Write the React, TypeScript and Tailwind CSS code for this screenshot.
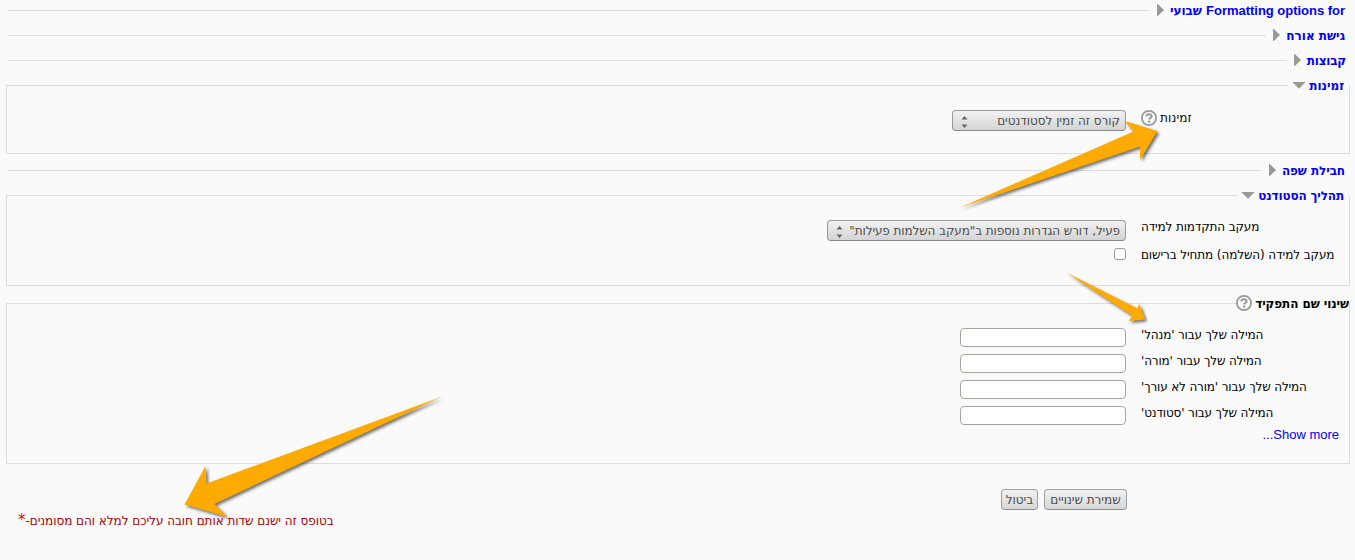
import type { ReactNode } from 'react';

const base = "font-['DejaVu_Sans','Liberation_Sans',sans-serif]";

function HelpIcon() {
  return (
    <svg className="size-4 shrink-0" viewBox="0 0 16 16" fill="none">
      <circle cx="8" cy="8" r="7.1" stroke="#999" strokeWidth="1.8" />
      <path d="M5.4 6.5C5.4 5 6.5 4.3 8 4.3s2.6.8 2.6 2.1c0 1.5-2.4 1.5-2.4 3" stroke="#999" strokeWidth="2" />
      <path d="M7 10.6h2.3v2H7z" fill="#999" />
    </svg>
  );
}

function Closed() {
  return (
    <svg className="ms-[6px] -mt-px h-3 w-[7px] shrink-0" viewBox="0 0 7 12">
      <path d="M0 0h.8L7 6 .8 12H0z" fill="#999" />
    </svg>
  );
}

function Open() {
  return (
    <svg className="ms-1 h-[7px] w-3 shrink-0" viewBox="0 0 12 7">
      <path d="M0 0h12v.8L6 6.8 0 .8z" fill="#999" />
    </svg>
  );
}

function Collapsed({ children, className = '', text = '' }: { children: ReactNode; className?: string; text?: string }) {
  return (
    <div className={`flex h-[21px] items-center pl-2 pr-[10px] ${className}`}>
      <a className={`whitespace-nowrap text-[12px] font-bold leading-[21px] text-[#0000ff] ${text}`}>{children}</a>
      <Closed />
      <span className="ms-[7px] h-px flex-1 bg-[#ddd]" />
    </div>
  );
}

function Box({ legend, children, className }: { legend: ReactNode; children: ReactNode; className: string }) {
  return (
    <section className={`ml-[6px] mr-[5px] flex flex-col border-x border-b border-[#ddd] ${className}`}>
      <div className="-mt-[10px] flex h-[21px] shrink-0 items-center">{legend}</div>
      {children}
    </section>
  );
}

function OpenLegend({ children, text = '' }: { children: ReactNode; text?: string }) {
  return (
    <>
      <a className={`ms-[5px] whitespace-nowrap text-[12px] font-bold text-[#0000ff] ${text}`}>{children}</a>
      <Open />
      <span className="ms-[5px] h-px flex-1 bg-[#ddd]" />
    </>
  );
}

function Row({ label, help, children, className, text = '' }: { label: string; help?: boolean; children: ReactNode; className: string; text?: string }) {
  return (
    <div className={`flex shrink-0 items-start gap-[15px] ${className}`}>
      <div className={`flex h-4 w-[208px] items-center justify-end gap-[3px] whitespace-nowrap text-[12px] leading-4 ${text}`}>
        <span>{label}</span>
        {help && <span className="-mt-px flex"><HelpIcon /></span>}
      </div>
      {children}
    </div>
  );
}

function Select({ children, className }: { children: string; className: string }) {
  return (
    <div className={`flex h-[21px] items-center justify-between rounded-[4px] border border-[#999] border-b-[#888] bg-linear-to-b from-[#f2f2f2] to-[#d4d4d4] ps-[5px] pe-2 text-[12px] text-[#4c4c4c] ${className}`}>
      <span className="whitespace-nowrap">{children}</span>
      <svg className="mt-[2px] h-3 w-[7px] shrink-0" viewBox="0 0 7 12">
        <path d="M.5 3.5L3.5 0l3 3.5zM.5 8.5h6l-3 3.5z" fill="#666" />
      </svg>
    </div>
  );
}

const roles = ['מנהל', 'מורה', 'מורה לא עורך', 'סטודנט'];

function Button({ children, className }: { children: string; className: string }) {
  return (
    <button className={`h-[21px] whitespace-nowrap rounded-[4px] border border-[#a0a0a0] border-b-[#8c8c8c] bg-linear-to-b from-[#f2f2f2] to-[#d6d6d6] text-[12px] leading-[20px] text-[#4c4c4c] ${className}`}>
      {children}
    </button>
  );
}

export default function App() {
  return (
    <main dir="rtl" className={`relative flex h-[560px] w-[1355px] flex-col overflow-hidden bg-[#fafafa] text-black ${base}`}>
      <Collapsed text="tracking-[-0.02px]">
        <span className="font-['Liberation_Sans'] text-[13px]">Formatting options for</span> שבועי
      </Collapsed>
      <Collapsed className="mt-1" text="pt-[2px]">גישת אורח</Collapsed>
      <Collapsed className="mt-1" text="pt-[2px] -ms-px tracking-[-0.2px]">קבוצות</Collapsed>

      <Box className="mt-[14px] h-[69px]" legend={<OpenLegend>זמינות</OpenLegend>}>
        <Row className="mt-[14px] h-[21px]" label="זמינות" help text="tracking-[0.15px]">
          <Select className="w-[174px] tracking-[-0.03px]">קורס זה זמין לסטודנטים</Select>
        </Row>
      </Box>

      <Collapsed className="mt-[6px]" text="pt-[2px] tracking-[-0.1px]">חבילת שפה</Collapsed>

      <Box className="mt-[14px] h-[91px]" legend={<OpenLegend text="tracking-[-0.15px]">תהליך הסטודנט</OpenLegend>}>
        <Row className="mt-[14px] h-[27px]" label="מעקב התקדמות למידה" text="-mt-px tracking-[-0.15px]">
          <Select className="w-[299px] tracking-[-0.1px]">פעיל, דורש הגדרות נוספות ב"מעקב השלמות פעילות"</Select>
        </Row>
        <Row className="h-4" label="מעקב למידה (השלמה) מתחיל ברישום" text="tracking-[-0.1px]">
          <span className="mt-px size-3 rounded-[3px] border border-[#999] bg-white" />
        </Row>
      </Box>

      <Box
        className="mt-[17px] h-[161px]"
        legend={
          <>
            <span className="whitespace-nowrap pt-px text-[12px] font-bold tracking-[-0.1px]">שינוי שם התפקיד</span>
            <span className="-mt-px ms-[3px] flex"><HelpIcon /></span>
            <span className="h-px flex-1 bg-[#ddd]" />
          </>
        }
      >
        <div className="mt-[14px] flex flex-col">
          {roles.map(r => (
            <Row key={r} className="h-[26px]" label={`המילה שלך עבור '${r}'`} text="-mt-px tracking-[-0.15px]">
              <input className="h-[19px] w-[166px] rounded-[4px] border border-[#a5a5a1] bg-white" />
            </Row>
          ))}
        </div>
        <a className="-mt-[5px] ps-[10px] font-['Liberation_Sans'] text-[13px] leading-4 text-[#0000ff]">Show more...</a>
      </Box>

      <div className="mt-[25px] flex gap-[6px] ps-[228px]">
        <Button className="w-[83px]">שמירת שינויים</Button>
        <Button className="w-[37px]">ביטול</Button>
      </div>
      <div className="mt-[3px] flex items-start justify-end pl-[18px] text-[12px] leading-4 text-[#aa0000]">
        <span className="tracking-[-0.04px]">בטופס זה ישנם שדות אותם חובה עליכם למלא והם מסומנים-</span>
        <span className="-mt-px text-[15px] text-[#ff0000]">*</span>
      </div>

      <svg className="pointer-events-none absolute inset-0 h-[560px] w-[1355px] drop-shadow-[2px_2px_1.5px_rgba(0,0,0,0.55)]" viewBox="0 0 1355 560" fill="#ffaa00">
        <path d="M960 207.5L1133.5 131.5L1124.5 121L1157.5 131L1140 160V146.5z" />
        <path d="M1066 272.5L1137.5 308.5L1139 303.5L1145 319.5L1128.5 321L1132.5 316z" />
        <path d="M442 396.5L206.5 483.5L205.5 466L184.5 504.5L227.5 517L214.5 504z" />
      </svg>
    </main>
  );
}
